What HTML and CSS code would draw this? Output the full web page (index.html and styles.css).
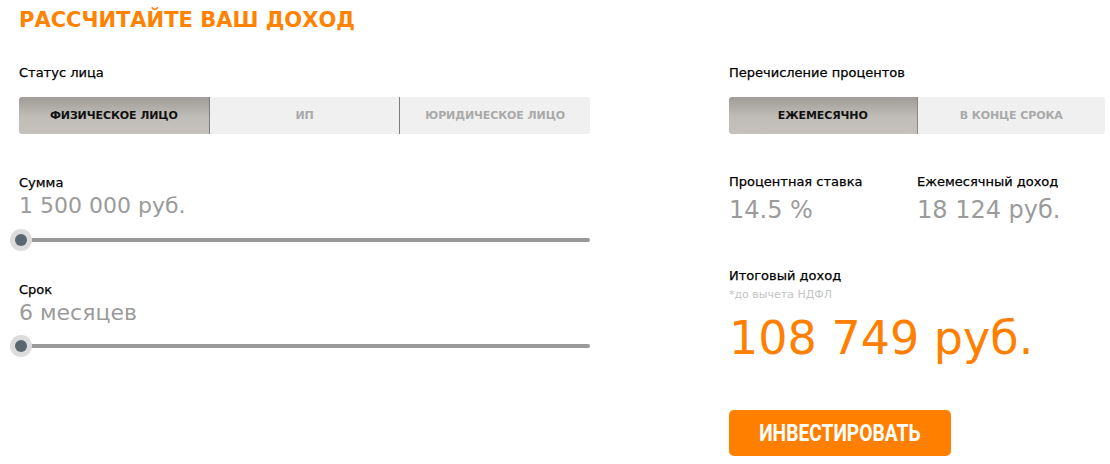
FILE: index.html
```html
<!DOCTYPE html>
<html lang="ru">
<head>
<meta charset="utf-8">
<title>Рассчитайте ваш доход</title>
<link rel="stylesheet" href="styles.css">
</head>
<body>
<div class="calc">
	<h2 class="calc_title">РАССЧИТАЙТЕ ВАШ ДОХОД</h2>
	<div class="calc_cols">
		<div class="calc_left">
			<div class="calc_label label_status">Статус лица</div>
			<div class="tabs tabs_3">
				<div class="tab tab_active">ФИЗИЧЕСКОЕ ЛИЦО</div>
				<div class="tab">ИП</div>
				<div class="tab">ЮРИДИЧЕСКОЕ ЛИЦО</div>
			</div>
			<div class="field field_sum">
				<div class="calc_label">Сумма</div>
				<div class="calc_value">1 500 000 руб.</div>
				<div class="range"><span class="range_thumb"></span></div>
			</div>
			<div class="field field_term">
				<div class="calc_label">Срок</div>
				<div class="calc_value">6 месяцев</div>
				<div class="range"><span class="range_thumb"></span></div>
			</div>
		</div>
		<div class="calc_right">
			<div class="calc_label label_status">Перечисление процентов</div>
			<div class="tabs tabs_2">
				<div class="tab tab_active">ЕЖЕМЕСЯЧНО</div>
				<div class="tab">В КОНЦЕ СРОКА</div>
			</div>
			<div class="result_row">
				<div class="result_cell">
					<div class="calc_label">Процентная ставка</div>
					<div class="result_value">14.5 %</div>
				</div>
				<div class="result_cell">
					<div class="calc_label">Ежемесячный доход</div>
					<div class="result_value">18 124 руб.</div>
				</div>
			</div>
			<div class="total">
				<div class="calc_label">Итоговый доход</div>
				<div class="total_note">*до вычета НДФЛ</div>
				<div class="total_value">108 749 руб.</div>
			</div>
			<a class="btn_invest" href="#"><span>ИНВЕСТИРОВАТЬ</span></a>
		</div>
	</div>
</div>
</body>
</html>
```

FILE: styles.css
```css
body{margin:0;background:#fff;font-family:"DejaVu Sans",Arial,sans-serif;color:#111;}
.calc{padding:6px 0 0 19px;}
.calc_title{margin:0;font-size:21px;line-height:28px;font-weight:bold;color:#ff8200;}
.calc_cols{display:grid;grid-template-columns:571px 376px;column-gap:139px;}
.calc_label{font-size:13px;line-height:16px;color:#000;-webkit-text-stroke:0.25px #000;}
.label_status{margin-top:31px;}
.tabs{display:flex;margin-top:16px;height:37px;border-radius:3px;overflow:hidden;background:#f0f0f0;}
.tab{flex:1;display:flex;align-items:center;justify-content:center;font-size:11px;font-weight:bold;color:#a9a9a9;letter-spacing:-0.1px;border-right:1px solid #7d7d7d;}
.tab:last-child{border-right:none;}
.tab_active{background:linear-gradient(#9f9c98,#c1bdb8 55%,#c4c0bb);color:#111;}
.tabs_2 .tab{border-right-color:#8a8783;}
.field_sum{margin-top:41px;}
.field_term{margin-top:40px;}
.calc_value{margin-top:2px;font-size:22px;line-height:26px;color:#9b9b9b;}
.range{position:relative;margin-top:19px;height:4px;background:#999;border-radius:2px;width:571px;}
.field_term .range{margin-top:18px;}
.range_thumb{position:absolute;left:-9px;top:-9px;width:22px;height:22px;border-radius:50%;background:#dcdcdc;}
.range_thumb:after{content:"";position:absolute;left:5px;top:5px;width:12px;height:12px;border-radius:50%;background:#5b6770;}
.result_row{display:flex;margin-top:40px;}
.result_cell{width:190px;}
.result_value{margin-top:5px;font-size:24px;line-height:30px;color:#9b9b9b;}
.total{margin-top:43px;}
.total_note{margin-top:4px;font-size:11px;line-height:14px;color:#c4c4c4;}
.total_value{margin-top:8px;font-size:46px;line-height:56px;color:#ff8000;}
.btn_invest{display:flex;align-items:center;justify-content:center;margin-top:44px;width:222px;height:46px;border-radius:5px;background:#ff8000;color:#fff;text-decoration:none;font-family:"Roboto",sans-serif;font-weight:bold;font-size:24px;}
.btn_invest span{display:inline-block;transform:scaleX(0.8);}
```
